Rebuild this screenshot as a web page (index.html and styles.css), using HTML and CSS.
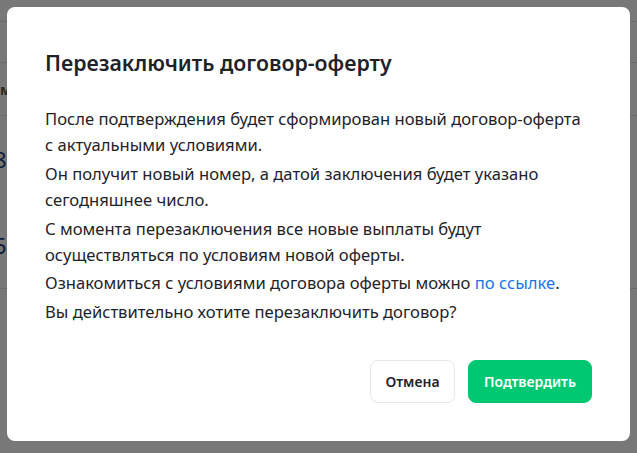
FILE: index.html
```html
<!DOCTYPE html>
<html lang="ru">
<head>
  <meta charset="UTF-8">
  <meta name="viewport" content="width=device-width, initial-scale=1.0">
  <title>Перезаключить договор-оферту</title>
  <link rel="stylesheet" href="styles.css">
</head>
<body>
  <!-- Page behind the dialog -->
  <div class="page">
    <div class="page-top"></div>
    <table class="grid">
      <tr class="grid-head"><th>Имя</th></tr>
      <tr><td>8</td></tr>
      <tr><td>5</td></tr>
    </table>
  </div>

  <!-- Dialog -->
  <div class="overlay">
    <div class="modal">
      <h2 class="modal-title">Перезаключить договор-оферту</h2>
      <div class="modal-body">
        <p>После подтверждения будет сформирован новый договор-оферта с актуальными условиями.</p>
        <p>Он получит новый номер, а датой заключения будет указано сегодняшнее число.</p>
        <p>С момента перезаключения все новые выплаты будут осуществляться по условиям новой оферты.</p>
        <p>Ознакомиться с условиями договора оферты можно <a href="#">по ссылке</a>.</p>
        <p>Вы действительно хотите перезаключить договор?</p>
      </div>
      <div class="modal-actions">
        <button class="btn btn-cancel">Отмена</button>
        <button class="btn btn-confirm">Подтвердить</button>
      </div>
    </div>
  </div>
</body>
</html>
```

FILE: styles.css
```css
body {
  font-family: "Noto Sans", "Open Sans", sans-serif;
  margin: 0;
  background: #fff;
  color: #1f2329;
}

.page {
  height: 453px;
  overflow: hidden;
}

.page-top {
  height: 21px;
  border-bottom: 1px solid #e3e3e3;
}

.grid {
  width: 100%;
  border-collapse: collapse;
  margin-top: 40px;
}

.grid th,
.grid td {
  text-align: left;
  padding: 0;
}

.grid th {
  height: 52px;
  border-top: 1px solid #e3e3e3;
  border-bottom: 1px solid #e3e3e3;
  font-size: 14px;
  font-weight: 700;
  color: #6b5a48;
  text-indent: -11px;
}

.grid td {
  height: 86px;
  font-size: 22px;
  color: #1d3c78;
  text-indent: -6px;
}

.grid tr:last-child td {
  border-bottom: 1px solid #e3e3e3;
}

.overlay {
  position: fixed;
  inset: 0;
  background: rgba(0, 0, 0, 0.53);
  display: flex;
  align-items: flex-start;
  justify-content: center;
  padding-top: 7px;
}

.modal {
  width: 547px;
  background: #fff;
  border-radius: 8px;
  padding: 38px;
}

.modal-title {
  margin: 4px 0 29px;
  font-size: 21.3px;
  line-height: 28px;
  font-weight: 600;
  color: #1f2329;
}

.modal-body {
  max-width: 540px;
}

.modal-body p {
  margin: 0 0 2px;
  font-size: 16.6px;
  line-height: 26.4px;
}

.modal-body p:last-child {
  margin-bottom: 0;
}

.modal-body a {
  color: #1a73e8;
  text-decoration: none;
}

.modal-actions {
  display: flex;
  justify-content: flex-end;
  gap: 13px;
  margin-top: 35px;
}

.btn {
  height: 43px;
  border-radius: 8px;
  font-family: inherit;
  font-size: 14px;
  font-weight: 600;
  padding: 0;
  cursor: pointer;
}

.btn-cancel {
  width: 85px;
  background: #fff;
  border: 1px solid #e4e6ea;
  color: #1f2329;
}

.btn-confirm {
  width: 124px;
  background: #00c872;
  border: 1px solid #00c872;
  color: #fff;
}
```
